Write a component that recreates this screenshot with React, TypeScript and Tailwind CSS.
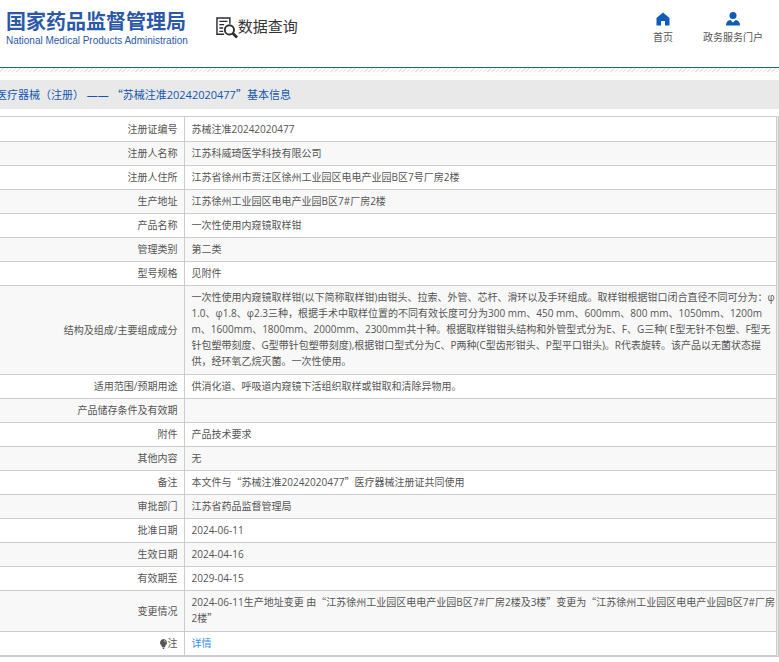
import { Fragment } from "react";

type Row = { label: string; value: string; tall?: boolean };

const rows: Row[] = [
  { label: "注册证编号", value: "苏械注准20242020477" },
  { label: "注册人名称", value: "江苏科威琦医学科技有限公司" },
  { label: "注册人住所", value: "江苏省徐州市贾汪区徐州工业园区电电产业园B区7号厂房2楼" },
  { label: "生产地址", value: "江苏徐州工业园区电电产业园B区7#厂房2楼" },
  { label: "产品名称", value: "一次性使用内窥镜取样钳" },
  { label: "管理类别", value: "第二类" },
  { label: "型号规格", value: "见附件" },
  {
    label: "结构及组成/主要组成成分",
    value:
      "一次性使用内窥镜取样钳(以下简称取样钳)由钳头、拉索、外管、芯杆、滑环以及手环组成。取样钳根据钳口闭合直径不同可分为：φ\n1.0、φ1.8、φ2.3三种，根据手术中取样位置的不同有效长度可分为300 mm、450 mm、600mm、800 mm、1050mm、1200m\nm、1600mm、1800mm、2000mm、2300mm共十种。根据取样钳钳头结构和外管型式分为E、F、G三种( E型无针不包塑、F型无\n针包塑带刻度、G型带针包塑带刻度),根据钳口型式分为C、P两种(C型齿形钳头、P型平口钳头)。R代表旋转。该产品以无菌状态提\n供，经环氧乙烷灭菌。一次性使用。",
    tall: true,
  },
  { label: "适用范围/预期用途", value: "供消化道、呼吸道内窥镜下活组织取样或钳取和清除异物用。" },
  { label: "产品储存条件及有效期", value: "" },
  { label: "附件", value: "产品技术要求" },
  { label: "其他内容", value: "无" },
  { label: "备注", value: "本文件与“苏械注准20242020477”医疗器械注册证共同使用" },
  { label: "审批部门", value: "江苏省药品监督管理局" },
  { label: "批准日期", value: "2024-06-11" },
  { label: "生效日期", value: "2024-04-16" },
  { label: "有效期至", value: "2029-04-15" },
  {
    label: "变更情况",
    value:
      "2024-06-11生产地址变更 由“江苏徐州工业园区电电产业园B区7#厂房2楼及3楼”变更为“江苏徐州工业园区电电产业园B区7#厂房\n2楼”",
    tall: true,
  },
];

// Curly quotes are set full width, in the Chinese face.
function Text({ children }: { children: string }) {
  return (
    <>
      {children.split(/([“”])/).map((part, i) =>
        part === "“" || part === "”" ? (
          <span key={i} className="font-['Noto_Sans_CJK_SC',sans-serif]">{part}</span>
        ) : (
          <Fragment key={i}>{part}</Fragment>
        ),
      )}
    </>
  );
}

function SearchDocIcon() {
  return (
    <svg width="22" height="22" viewBox="0 0 23 23" fill="none" stroke="#2b2b33" aria-hidden="true">
      <path d="M14.500 7V1H1v17h7.500" strokeWidth="1.500" />
      <path d="M3.500 4.500h8.500M3.500 8h5M3.500 11.500h4M3.500 15h4" strokeWidth="1.400" />
      <circle cx="14" cy="13.500" r="4.800" strokeWidth="2" />
      <path d="M17.500 17l4.500 4.500" strokeWidth="2.800" />
    </svg>
  );
}

function HomeIcon() {
  return (
    <svg width="14" height="14" viewBox="0 0 14 14" fill="#0d5bbb" aria-hidden="true">
      <path d="M7 0.500L13.500 6v7.500H9V9H5v4.500H0.500V6z" />
    </svg>
  );
}

function UserIcon() {
  return (
    <svg width="14" height="14" viewBox="0 0 14 14" fill="#0d5bbb" aria-hidden="true">
      <ellipse cx="7" cy="3.500" rx="3.500" ry="3.500" />
      <path d="M0 13.500c0-3.500 1.500-5 4.500-5.500L7 10.500 9.500 8c3 .5 4.500 2 4.500 5.500z" />
    </svg>
  );
}

function BulbIcon() {
  return (
    <svg className="inline-block align-middle" width="9" height="10" viewBox="0 0 9 10" fill="#555" aria-hidden="true">
      <path d="M4.500 0a3.600 3.600 0 0 1 2 6.500L6 8H3L2.500 6.500A3.600 3.600 0 0 1 4.500 0zM3.200 8.600h2.600L5 10H4z" />
      <path d="M5 1.500a2 2 0 0 1 1.500 1.700" stroke="#ddd" strokeWidth=".8" fill="none" />
    </svg>
  );
}

export default function App() {
  return (
    <div className="min-h-screen overflow-hidden bg-white font-['Open_Sans','Noto_Sans_CJK_SC',sans-serif] text-[10px] leading-4 text-[#555]">
      <header className="flex h-[68px] items-start justify-between border-b border-[#1b6488] pr-4 pl-[6px]">
        <div className="flex items-start">
          <div className="pt-[9px] text-[#2b59a8]">
            <h1 className="text-[20px] leading-[26px] font-bold">国家药品监督管理局</h1>
            <p className="font-['Liberation_Sans',sans-serif] text-[10px] leading-3">National Medical Products Administration</p>
          </div>
          <h2 className="ml-7 flex items-start pt-[17px] text-[15px] leading-[18px] text-[#333]">
            <SearchDocIcon />
            数据查询
          </h2>
        </div>
        <nav className="flex gap-[30px] pt-3">
          <a href="#home" className="flex flex-col items-center gap-[3px]">
            <HomeIcon />
            首页
          </a>
          <a href="#portal" className="flex flex-col items-center gap-[3px]">
            <UserIcon />
            政务服务门户
          </a>
        </nav>
      </header>
      <div className="h-3 bg-[repeating-linear-gradient(135deg,#fff_0_2px,#e6e6e6_2px_3px)] bg-[length:100%_4px] bg-no-repeat" />
      <h3 className="-ml-1 bg-[#e9e9e9] py-[5px] text-[11px] leading-[18px] text-[#1256ae]">
        <Text>医疗器械（注册） —— “苏械注准20242020477”基本信息</Text>
      </h3>
      <div className="mt-[7px] border-r border-b border-[#ccc] bg-[#ececf0] pr-px">
        <table className="w-full border-collapse bg-white">
          <tbody>
            {rows.map((row) => (
              <tr key={row.label} className="border-y border-[#ccc] first:h-[25px] even:bg-[#f8f8f8]">
                <th scope="row" className="w-[184px] border-r border-[#ccc] pt-[3px] pr-[6px] pb-1 text-right font-normal whitespace-nowrap">
                  {row.label}
                </th>
                <td className={row.tall ? "border-r border-[#ccc] pt-[3px] pb-[5px] pl-[7px] whitespace-pre-line" : "h-6 border-r border-[#ccc] pt-[3px] pb-1 pl-[7px]"}>
                  <Text>{row.value}</Text>
                </td>
              </tr>
            ))}
            <tr className="border-y border-[#ccc]">
              <th scope="row" className="border-r border-[#ccc] pt-[3px] pr-[6px] pb-1 text-right font-normal">
                <BulbIcon />注
              </th>
              <td className="h-6 border-r border-[#ccc] pt-[3px] pb-1 pl-[7px]">
                <a href="#detail" className="text-[#3390ff]">详情</a>
              </td>
            </tr>
          </tbody>
        </table>
      </div>
    </div>
  );
}
